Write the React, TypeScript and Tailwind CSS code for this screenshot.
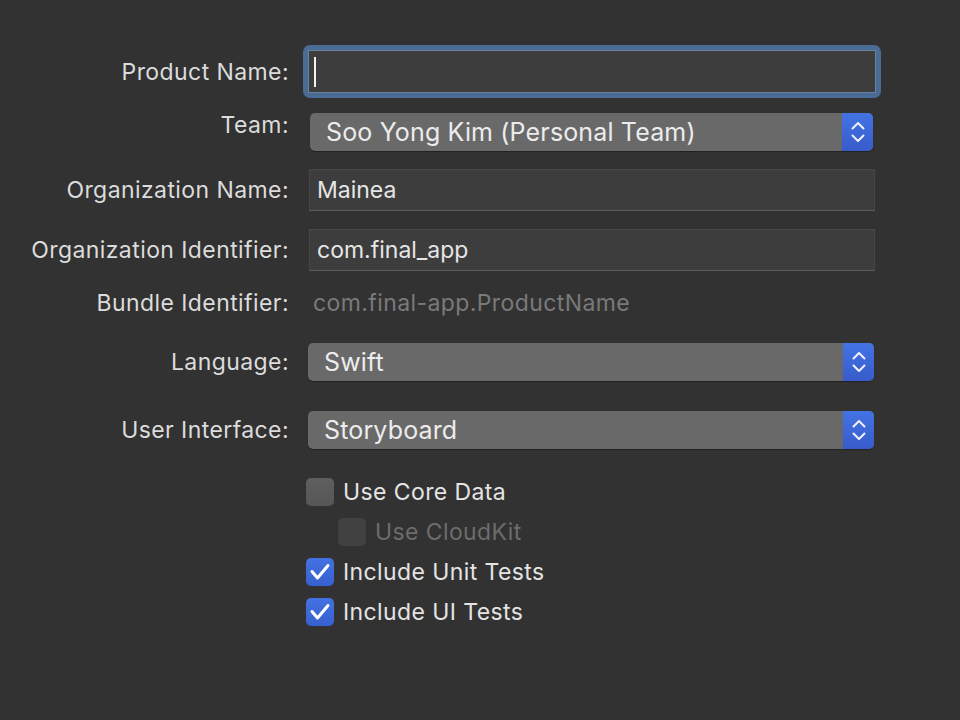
import React from "react";

const font = { fontFamily: "Inter, 'Noto Sans', 'Liberation Sans', sans-serif" };

function Label({ text, className = "" }: { text: string; className?: string }) {
  return (
    <div
      className={`w-[289px] shrink-0 text-right text-[23px] leading-[28px] tracking-[0.42px] text-[#dcdcdc] ${className}`}
    >
      {text}
    </div>
  );
}

function Stepper() {
  return (
    <div className="flex h-full w-[31px] items-center justify-center rounded-r-[5px] bg-gradient-to-b from-[#4373e4] to-[#385bcb]">
      <svg width="14" height="22" viewBox="0 0 14 22" fill="none">
        <path d="M1.5 7.5 L7 2 L12.5 7.5" stroke="#eef2fb" strokeWidth="2" strokeLinecap="round" strokeLinejoin="round" />
        <path d="M1.5 14.5 L7 20 L12.5 14.5" stroke="#eef2fb" strokeWidth="2" strokeLinecap="round" strokeLinejoin="round" />
      </svg>
    </div>
  );
}

function Popup({ value, className = "" }: { value: string; className?: string }) {
  return (
    <div className={`flex h-[38px] items-center rounded-[5px] bg-[#696969] shadow-[0_1px_1px_rgba(0,0,0,0.35)] ${className}`}>
      <div className="flex-1 pl-4 text-[25px] leading-[30px] tracking-[0.15px] text-[#ececec]">{value}</div>
      <Stepper />
    </div>
  );
}

function TextField({ value }: { value: string }) {
  return (
    <div className="ml-[6px] flex h-[42px] w-[566px] items-center border border-[#474747] border-b-[#5e5e5e] bg-[#3d3d3d] pl-[7px] text-[23px] leading-[28px] text-[#e6e6e6]">
      {value}
    </div>
  );
}

function Checkbox({ checked, disabled }: { checked?: boolean; disabled?: boolean }) {
  if (checked) {
    return (
      <div className="flex h-[28px] w-[28px] shrink-0 items-center justify-center rounded-[5px] bg-gradient-to-b from-[#4372e2] to-[#3960cf]">
        <svg width="28" height="28" viewBox="0 0 28 28" fill="none">
          <path d="M6 13.5 L11.5 20 L22 7.5" stroke="#ffffff" strokeWidth="3" strokeLinecap="round" strokeLinejoin="round" />
        </svg>
      </div>
    );
  }
  return (
    <div
      className={`h-[28px] w-[28px] shrink-0 rounded-[5px] ${
        disabled ? "bg-[#414141]" : "bg-gradient-to-b from-[#5f5f5f] to-[#565656]"
      }`}
    />
  );
}

function CheckRow({
  label,
  checked,
  disabled,
  className = "",
}: {
  label: string;
  checked?: boolean;
  disabled?: boolean;
  className?: string;
}) {
  return (
    <div className={`flex h-[28px] items-center gap-[9px] ${className}`}>
      <Checkbox checked={checked} disabled={disabled} />
      <span
        className={`text-[23px] leading-[28px] tracking-[0.4px] ${disabled ? "text-[#6c6c6c]" : "text-[#e4e4e4]"}`}
      >
        {label}
      </span>
    </div>
  );
}

export default function App() {
  return (
    <div className="h-[720px] w-[960px] overflow-hidden bg-[#323232] pt-[45px]" style={font}>
      {/* Product Name */}
      <div className="flex h-[53px] items-center gap-[14px]">
        <Label text="Product Name:" />
        <div className="h-[53px] w-[578px] rounded-[7px] border-[5px] border-[#4a6b94] p-0">
          <div className="flex h-full w-full items-center border border-[#6c819c] bg-[#3d3d3d] pl-[5px]">
            <div className="h-[30px] w-[2px] bg-[#f2f2f2]" />
          </div>
        </div>
      </div>

      {/* Team */}
      <div className="mt-[15px] flex h-[38px] items-center gap-[14px]">
        <Label text="Team:" className="mb-[14px]" />
        <Popup value="Soo Yong Kim (Personal Team)" className="ml-[7px] w-[563px]" />
      </div>

      {/* Organization Name */}
      <div className="mt-[18px] flex h-[42px] items-center gap-[14px]">
        <Label text="Organization Name:" />
        <TextField value="Mainea" />
      </div>

      {/* Organization Identifier */}
      <div className="mt-[18px] flex h-[42px] items-center gap-[14px]">
        <Label text="Organization Identifier:" />
        <TextField value="com.final_app" />
      </div>

      {/* Bundle Identifier */}
      <div className="mt-[18px] flex h-[28px] items-center gap-[14px]">
        <Label text="Bundle Identifier:" />
        <div className="ml-[10px] text-[23px] leading-[28px] tracking-[0.4px] text-[#7a7a7a]">
          com.final-app.ProductName
        </div>
      </div>

      {/* Language */}
      <div className="mt-[26px] flex h-[38px] items-center gap-[14px]">
        <Label text="Language:" />
        <Popup value="Swift" className="ml-[5px] w-[566px]" />
      </div>

      {/* User Interface */}
      <div className="mt-[30px] flex h-[38px] items-center gap-[14px]">
        <Label text="User Interface:" />
        <Popup value="Storyboard" className="ml-[5px] w-[566px]" />
      </div>

      {/* Options */}
      <div className="mt-[29px] flex flex-col gap-[12px] pl-[306px]">
        <CheckRow label="Use Core Data" />
        <CheckRow label="Use CloudKit" disabled className="ml-[32px]" />
        <CheckRow label="Include Unit Tests" checked />
        <CheckRow label="Include UI Tests" checked />
      </div>
    </div>
  );
}
